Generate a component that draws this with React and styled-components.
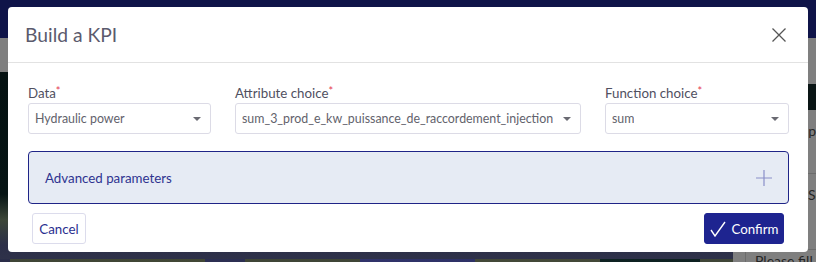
import React from "react";
import styled, { createGlobalStyle } from "styled-components";

const GlobalStyle = createGlobalStyle`
  html, body {
    margin: 0;
    padding: 0;
  }
  body {
    font-family: Lato, "Open Sans", sans-serif;
    background: #7f7f7f;
  }
`;

const Screen = styled.div`
  position: relative;
  width: 816px;
  height: 262px;
  overflow: hidden;
`;

/* page behind the dimmed overlay */
const Backdrop = styled.div`
  display: flex;
  flex-direction: column;
  height: 100%;
`;
const NavBar = styled.div`
  height: 38px;
  flex-shrink: 0;
  background: #0f1449;
`;
const Main = styled.div`
  flex: 1;
  display: flex;
`;
const MapArea = styled.div`
  flex: 1;
  display: flex;
  flex-direction: column;
`;
const Breadcrumb = styled.div`
  height: 34px;
  background: #7f7f7f;
`;
const MapView = styled.div`
  flex: 1;
  display: flex;
  flex-direction: column;
  justify-content: flex-end;
  background: linear-gradient(180deg, #051212 0%, #061414 62%, #3c4638 75%, #2c2f48 88%, #30334a 100%);
`;
const MapStrip = styled.div`
  height: 10px;
  background: linear-gradient(90deg,
    #2a2d48 0px, #2a2d48 10px,
    #3f4536 10px, #414735 205px,
    #2c2f52 205px, #2c2f52 245px,
    #3f4536 245px, #3f4536 360px,
    #30336a 360px, #2e3166 475px,
    #434838 475px, #434838 600px,
    #0e2222 600px, #0d2020 700px,
    #3f4536 700px, #3f4536 100%);
`;
const SidePanel = styled.div`
  width: 83px;
  display: flex;
  flex-direction: column;
  background: #7f7f7f;
  color: #262626;
  font-size: 14px;
`;
const SideTop = styled.div`
  height: 46px;
`;
const SideDark = styled.div`
  height: 26px;
  background: #0a1515;
`;
const SideRow = styled.div`
  height: ${(p) => p.h}px;
  border-bottom: 1px solid #6c6c6c;
  padding: 12px 0 0 ${(p) => p.indent}px;
  white-space: nowrap;
  overflow: hidden;
  box-sizing: border-box;
`;
const SideNote = styled.div`
  flex: 1;
  margin-left: 12px;
  border-left: 1px solid #6c6c6c;
  padding: 2px 0 0 9px;
  white-space: nowrap;
  overflow: hidden;
`;

/* the dialog */
const Modal = styled.div`
  position: absolute;
  left: 8px;
  top: 7px;
  width: 800px;
  height: 245px;
  background: #fff;
  border-radius: 4px;
  display: flex;
  flex-direction: column;
  box-sizing: border-box;
`;
const Header = styled.div`
  height: 56px;
  flex-shrink: 0;
  box-sizing: border-box;
  border-bottom: 1px solid #e2e2e2;
  display: flex;
  align-items: center;
  justify-content: space-between;
  padding: 0 22px 0 17px;
`;
const Title = styled.h2`
  margin: 0;
  font-size: 19.3px;
  font-weight: 400;
  color: #5b5a6d;
`;
const CloseButton = styled.button`
  border: none;
  background: none;
  padding: 0;
  width: 14px;
  height: 14px;
  display: flex;
  cursor: pointer;
`;
const Body = styled.div`
  padding: 22px 19px 0 20px;
  display: flex;
  flex-direction: column;
`;
const Fields = styled.div`
  display: grid;
  grid-template-columns: 183px minmax(0, 1fr) 184px;
  column-gap: 24px;
`;
const Field = styled.div`
  display: flex;
  flex-direction: column;
  min-width: 0;
`;
const Label = styled.label`
  font-size: 13.3px;
  line-height: 17px;
  color: #50505f;
  margin-bottom: 1px;
`;
const Required = styled.span`
  color: #e53950;
  font-size: 11px;
  vertical-align: top;
  line-height: 12px;
`;
const Select = styled.div`
  height: 31px;
  box-sizing: border-box;
  border: 1px solid #dcdbe6;
  border-radius: 3px;
  display: flex;
  align-items: center;
  justify-content: space-between;
  padding: 0 9px 0 6px;
  font-size: 12.4px;
  color: #62626c;
`;
const Value = styled.span`
  overflow: hidden;
  white-space: nowrap;
  text-overflow: ellipsis;
`;
const Caret = styled.span`
  flex-shrink: 0;
  width: 0;
  height: 0;
  border-left: 4px solid transparent;
  border-right: 4px solid transparent;
  border-top: 4px solid #6a6a72;
  margin-left: 4px;
`;
const Advanced = styled.div`
  margin-top: 17px;
  height: 53px;
  box-sizing: border-box;
  background: #e6ebf4;
  border: 1px solid #1f2487;
  border-radius: 4px;
  display: flex;
  align-items: center;
  justify-content: space-between;
  padding: 0 16px 0 16px;
  font-size: 13.3px;
  color: #2e3390;
`;
const Footer = styled.div`
  display: flex;
  justify-content: space-between;
  padding: 9px 24px 0 24px;
`;
const Button = styled.button`
  height: 31px;
  box-sizing: border-box;
  border-radius: 3px;
  font-family: Lato, "Open Sans", sans-serif;
  font-size: 13.3px;
  display: flex;
  align-items: center;
  justify-content: center;
  gap: 6px;
  padding: 0;
  cursor: pointer;
  width: ${(p) => p.w}px;
  border: 1px solid ${(p) => (p.primary ? "#1e2490" : "#dcdcec")};
  background: ${(p) => (p.primary ? "#1e2490" : "#fff")};
  color: ${(p) => (p.primary ? "#fff" : "#2a2f8f")};
`;

const App = () => {
  return (
    <Screen>
      <GlobalStyle />
      <Backdrop>
        <NavBar />
        <Main>
          <MapArea>
            <Breadcrumb />
            <MapView>
              <MapStrip />
            </MapView>
          </MapArea>
          <SidePanel>
            <SideTop />
            <SideDark />
            <SideRow h={64} indent={59}>Capacité</SideRow>
            <SideRow h={76} indent={75}>Source</SideRow>
            <SideNote>Please fill in</SideNote>
          </SidePanel>
        </Main>
      </Backdrop>

      <Modal>
        <Header>
          <Title>Build a KPI</Title>
          <CloseButton aria-label="close">
            <svg width="14" height="14" viewBox="0 0 14 14">
              <path d="M0.5 0.5 L13.5 13.5 M13.5 0.5 L0.5 13.5" stroke="#555" strokeWidth="1.3" fill="none" />
            </svg>
          </CloseButton>
        </Header>
        <Body>
          <Fields>
            <Field>
              <Label>Data<Required>*</Required></Label>
              <Select><Value>Hydraulic power</Value><Caret /></Select>
            </Field>
            <Field>
              <Label>Attribute choice<Required>*</Required></Label>
              <Select><Value>sum_3_prod_e_kw_puissance_de_raccordement_injection</Value><Caret /></Select>
            </Field>
            <Field>
              <Label>Function choice<Required>*</Required></Label>
              <Select><Value>sum</Value><Caret /></Select>
            </Field>
          </Fields>
          <Advanced>
            Advanced parameters
            <svg width="16" height="16" viewBox="0 0 16 16">
              <path d="M8 0 V16 M0 8 H16" stroke="#8a8fc8" strokeWidth="1.2" fill="none" />
            </svg>
          </Advanced>
        </Body>
        <Footer>
          <Button w={54}>Cancel</Button>
          <Button w={80} primary>
            <svg width="16" height="16" viewBox="0 0 16 16">
              <path d="M1 9 L5 15 L15 1" stroke="#fff" strokeWidth="1.4" fill="none" />
            </svg>
            Confirm
          </Button>
        </Footer>
      </Modal>
    </Screen>
  );
};

export default App;
